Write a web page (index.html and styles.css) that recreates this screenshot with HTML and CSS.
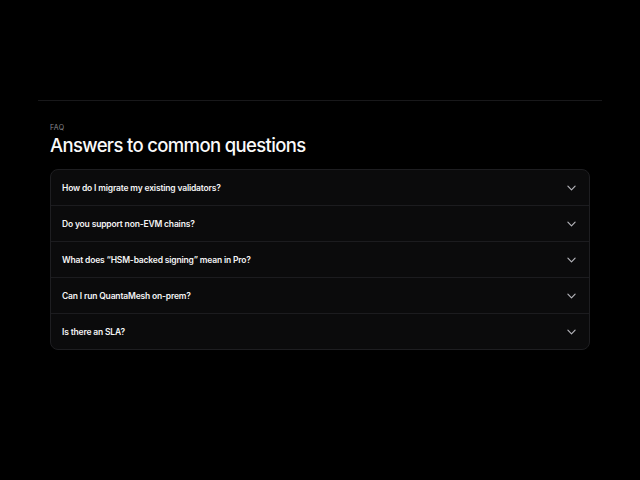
FILE: index.html
```html
<!DOCTYPE html>
<html lang="en">
<head>
  <meta charset="UTF-8" />
  <meta name="viewport" content="width=device-width, initial-scale=1.0"/>
  <title>FAQ</title>
  <link rel="stylesheet" href="styles.css">
</head>
<body>
  <div class="container">
    <section class="faq">
      <div class="eyebrow">FAQ</div>
      <h2>Answers to common questions</h2>

      <div class="faq-list">
        <div class="faq-item">
          <span>How do I migrate my existing validators?</span>
          <svg class="chev" viewBox="0 0 10 6" width="9" height="6"><path d="M1 1l4 4 4-4" /></svg>
        </div>
        <div class="faq-item">
          <span>Do you support non-EVM chains?</span>
          <svg class="chev" viewBox="0 0 10 6" width="9" height="6"><path d="M1 1l4 4 4-4" /></svg>
        </div>
        <div class="faq-item">
          <span>What does “HSM-backed signing” mean in Pro?</span>
          <svg class="chev" viewBox="0 0 10 6" width="9" height="6"><path d="M1 1l4 4 4-4" /></svg>
        </div>
        <div class="faq-item">
          <span>Can I run QuantaMesh on-prem?</span>
          <svg class="chev" viewBox="0 0 10 6" width="9" height="6"><path d="M1 1l4 4 4-4" /></svg>
        </div>
        <div class="faq-item">
          <span>Is there an SLA?</span>
          <svg class="chev" viewBox="0 0 10 6" width="9" height="6"><path d="M1 1l4 4 4-4" /></svg>
        </div>
      </div>
    </section>
  </div>
</body>
</html>
```

FILE: styles.css
```css
body {
  margin: 0;
  background: #000;
  color: #f2f2f3;
  font-family: Inter, "Liberation Sans", sans-serif;
}
.container {
  max-width: 564px;
  margin: 0 auto;
  padding-top: 100px;
}
.faq {
  border-top: 1px solid #18181a;
  padding: 22px 12px;
}
.eyebrow {
  font-size: 7px;
  letter-spacing: 0.04em;
  color: #8a8a90;
  text-transform: uppercase;
}
h2 {
  margin: 2px 0 13px;
  font-size: 18.5px;
  font-weight: 500;
  letter-spacing: -0.035em;
  color: #fafafa;
}
.faq-list {
  background: #0b0b0c;
  border: 1px solid #1e1e21;
  border-radius: 8px;
  overflow: hidden;
}
.faq-item {
  height: 35px;
  display: flex;
  align-items: center;
  justify-content: space-between;
  padding: 0 13px 0 11px;
  font-size: 8.5px;
  font-weight: 600;
  letter-spacing: -0.02em;
  color: #f4f4f5;
  border-top: 1px solid #1c1c1f;
}
.faq-item:first-child {
  border-top: none;
}
.chev {
  fill: none;
  stroke: #b4b4ba;
  stroke-width: 1.3;
  stroke-linecap: round;
  stroke-linejoin: round;
}
```
